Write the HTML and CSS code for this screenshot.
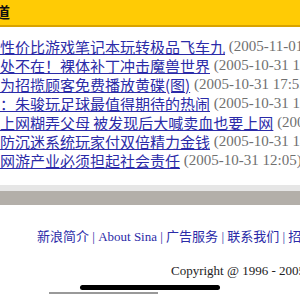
FILE: index.html
```html
<!DOCTYPE html>
<html lang="zh">
<head>
    <meta charset="UTF-8">
    <meta name="viewport" content="width=device-width, initial-scale=1.0">
    <title>新浪游戏</title>
    <link rel="stylesheet" href="styles.css">
</head>
<body>

    <div class="topbar">
        <span class="topbar-title">道</span>
    </div>

    <ul class="news-list">
        <li><a href="#">性价比游戏笔记本玩转极品飞车九</a> <span class="date">(2005-11-01 10:21)</span></li>
        <li><a href="#">处不在！裸体补丁冲击魔兽世界</a> <span class="date">(2005-10-31 18:02)</span></li>
        <li><a href="#">为招揽顾客免费播放黄碟(图)</a> <span class="date">(2005-10-31 17:55)</span></li>
        <li><a href="#">：朱骏玩足球最值得期待的热闹</a> <span class="date">(2005-10-31 16:40)</span></li>
        <li><a href="#">上网糊弄父母 被发现后大喊卖血也要上网</a> <span class="date">(2005-10-31 15:12)</span></li>
        <li><a href="#">防沉迷系统玩家付双倍精力金钱</a> <span class="date">(2005-10-31 14:30)</span></li>
        <li><a href="#">网游产业必须担起社会责任</a> <span class="date">(2005-10-31 12:05)</span></li>
    </ul>

    <div class="divider"></div>

    <div class="footer">
        <p class="footer-links">
            <a href="#">新浪简介</a> | <a href="#">About Sina</a> | <a href="#">广告服务</a> | <a href="#">联系我们</a> | <a href="#">招聘信息</a>
        </p>
        <p class="copyright">Copyright @ 1996 - 2005 SINA Inc.</p>
    </div>

    <svg class="grip" width="300" height="16" viewBox="0 0 300 16">
        <rect x="80" y="4" width="140" height="5" rx="2.5" fill="#000"/>
        <rect x="49" y="11" width="109" height="2" fill="#999"/>
    </svg>

</body>
</html>
```

FILE: styles.css
```css
html {
    overflow: hidden;
}
body {
    margin: 0;
    background: #fff;
    font-family: "Liberation Serif", "Noto Sans CJK SC", serif;
}
.topbar {
    height: 25px;
    background-color: #ffcb05;
    border-bottom: 2px solid #d9a300;
    white-space: nowrap;
    overflow: hidden;
}
.topbar-title {
    display: inline-block;
    margin-left: -5px;
    font-family: "Noto Sans CJK SC", sans-serif;
    font-weight: bold;
    font-size: 15px;
    line-height: 24px;
    color: #111;
}
.news-list {
    list-style: none;
    margin: 10px 0 0 0;
    padding: 0;
}
.news-list li {
    height: 19px;
    font-size: 15px;
    line-height: 19px;
    white-space: nowrap;
    overflow: hidden;
}
.news-list li > * {
    vertical-align: top;
}
.news-list a {
    font-family: "Noto Sans CJK SC", sans-serif;
    color: #2b2ba8;
    text-decoration: underline;
}
.date {
    color: #707070;
}
.divider {
    margin-top: 15px;
    height: 14px;
    background-color: #b3afa9;
    border-top: 6px solid #e6e6e6;
}
.footer {
    font-size: 13px;
    white-space: nowrap;
    overflow: hidden;
}
.footer p {
    margin: 0;
    height: 17px;
    line-height: 17px;
}
.footer-links {
    padding: 23px 0 0 37px;
    color: #2b2ba8;
}
.footer-links a {
    vertical-align: top;
    color: #2b2ba8;
    text-decoration: none;
}
.copyright {
    padding: 17px 0 0 171px;
    color: #222;
}
.grip {
    display: block;
    margin-top: 2px;
}
```
